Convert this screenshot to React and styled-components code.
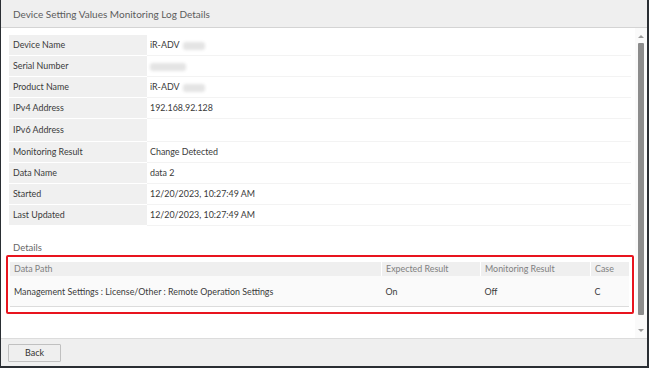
import React from 'react'
import styled, { createGlobalStyle } from 'styled-components'

const GlobalStyle = createGlobalStyle`
  html, body { margin: 0; padding: 0; background: #fff; }
  body { font-family: Lato, "Open Sans", sans-serif; }
`

const Dialog = styled.div`
  width: 649px;
  height: 368px;
  box-sizing: border-box;
  border-left: 1px solid #2a2e33;
  border-right: 2px solid #2a2e33;
  border-bottom: 2px solid #2a2e33;
  display: flex;
  flex-direction: column;
  background: #fff;
  color: #3a3a3a;
`

const Header = styled.div`
  height: 27px;
  flex: none;
  background: #efefef;
  border-bottom: 1px solid #d4d4d4;
  display: flex;
  align-items: center;
  padding-left: 12px;
  font-size: 10px;
  color: #5c5c5c;
`

const Body = styled.div`
  flex: 1;
  display: flex;
  min-height: 0;
`

const Content = styled.div`
  flex: 1;
  padding: 7px 0 0 8px;
  min-width: 0;
`

const InfoTable = styled.table`
  width: 622px;
  border-collapse: collapse;
  font-size: 8.9px;
  line-height: 12px;
`

const Label = styled.td`
  width: 134px;
  background: #f0f0f0;
  padding: 0 0 0 4px;
  height: ${p => (p.$tall ? 22 : 20)}px;
  border-bottom: 1px solid #fff;
`

const Value = styled.td`
  padding: 0 0 0 3px;
  border-bottom: 1px solid #f3f3f3;
`

const Blur = styled.span`
  display: inline-block;
  width: ${p => p.$w}px;
  height: 8px;
  margin-left: ${p => p.$ml || 0}px;
  vertical-align: middle;
  background: #e4e4e4;
  border-radius: 3px;
  filter: blur(1.5px);
`

const SectionTitle = styled.div`
  margin: 15px 0 0 4px;
  font-size: 9.5px;
  line-height: 14px;
  color: #666;
`

const Highlight = styled.div`
  margin: 0 0 0 -3px;
  width: 628px;
  box-sizing: border-box;
  border: 2px solid #e8141e;
  border-radius: 2px;
  padding: 5px 2px 5px 2px;
`

const DetailTable = styled.table`
  width: 619px;
  border-collapse: collapse;
  font-size: 8.9px;
  line-height: 12px;
  border-bottom: 1px solid #dcdcdc;
`

const HeadCell = styled.th`
  background: #efefef;
  color: #808080;
  font-weight: normal;
  text-align: left;
  height: 14px;
  padding: 0 0 0 4px;
  width: ${p => p.$w || 'auto'};
  border-left: ${p => (p.$first ? 'none' : '1px solid #fff')};
`

const Cell = styled.td`
  background: #fafafa;
  height: 28px;
  padding: 2px 0 0 4px;
`

const ScrollTrack = styled.div`
  width: 12px;
  flex: none;
  display: flex;
  flex-direction: column;
  align-items: center;
  background: #fafafa;
  padding-top: 7px;
`

const Arrow = styled.div`
  width: 0;
  height: 0;
  border-left: 3px solid transparent;
  border-right: 3px solid transparent;
  ${p => (p.$down ? 'border-top: 3px solid #9a9a9a;' : 'border-bottom: 3px solid #9a9a9a;')}
`

const Thumb = styled.div`
  width: 6px;
  height: 272px;
  margin: 5px 0 14px;
  background: #8c8c8c;
  border-radius: 1px;
`

const Footer = styled.div`
  height: 27px;
  flex: none;
  background: #efefef;
  border-top: 1px solid #dcdcdc;
  display: flex;
  align-items: center;
  padding-left: 7px;
`

const Button = styled.button`
  width: 53px;
  height: 18px;
  padding: 0;
  background: #efefef;
  border: 1px solid #c0c0c0;
  border-radius: 1px;
  font-family: inherit;
  font-size: 9px;
  color: #333;
`

const rows = [
  ['Device Name', <>iR-ADV<Blur $w={22} $ml={3} /></>],
  ['Serial Number', <Blur $w={36} />],
  ['Product Name', <>iR-ADV<Blur $w={22} $ml={3} /></>],
  ['IPv4 Address', '192.168.92.128'],
  ['IPv6 Address', '', true],
  ['Monitoring Result', 'Change Detected'],
  ['Data Name', 'data 2'],
  ['Started', '12/20/2023, 10:27:49 AM'],
  ['Last Updated', '12/20/2023, 10:27:49 AM'],
]

export default function App() {
  return (
    <>
      <GlobalStyle />
      <Dialog>
        <Header>Device Setting Values Monitoring Log Details</Header>
        <Body>
          <Content>
            <InfoTable>
              <tbody>
                {rows.map(([label, value, tall]) => (
                  <tr key={label}>
                    <Label $tall={tall}>{label}</Label>
                    <Value>{value}</Value>
                  </tr>
                ))}
              </tbody>
            </InfoTable>
            <SectionTitle>Details</SectionTitle>
            <Highlight>
              <DetailTable>
                <thead>
                  <tr>
                    <HeadCell $first>Data Path</HeadCell>
                    <HeadCell $w="94px">Expected Result</HeadCell>
                    <HeadCell $w="105px">Monitoring Result</HeadCell>
                    <HeadCell $w="34px">Case</HeadCell>
                  </tr>
                </thead>
                <tbody>
                  <tr>
                    <Cell>Management Settings : License/Other : Remote Operation Settings</Cell>
                    <Cell>On</Cell>
                    <Cell>Off</Cell>
                    <Cell>C</Cell>
                  </tr>
                </tbody>
              </DetailTable>
            </Highlight>
          </Content>
          <ScrollTrack>
            <Arrow />
            <Thumb />
            <Arrow $down />
          </ScrollTrack>
        </Body>
        <Footer>
          <Button>Back</Button>
        </Footer>
      </Dialog>
    </>
  )
}
